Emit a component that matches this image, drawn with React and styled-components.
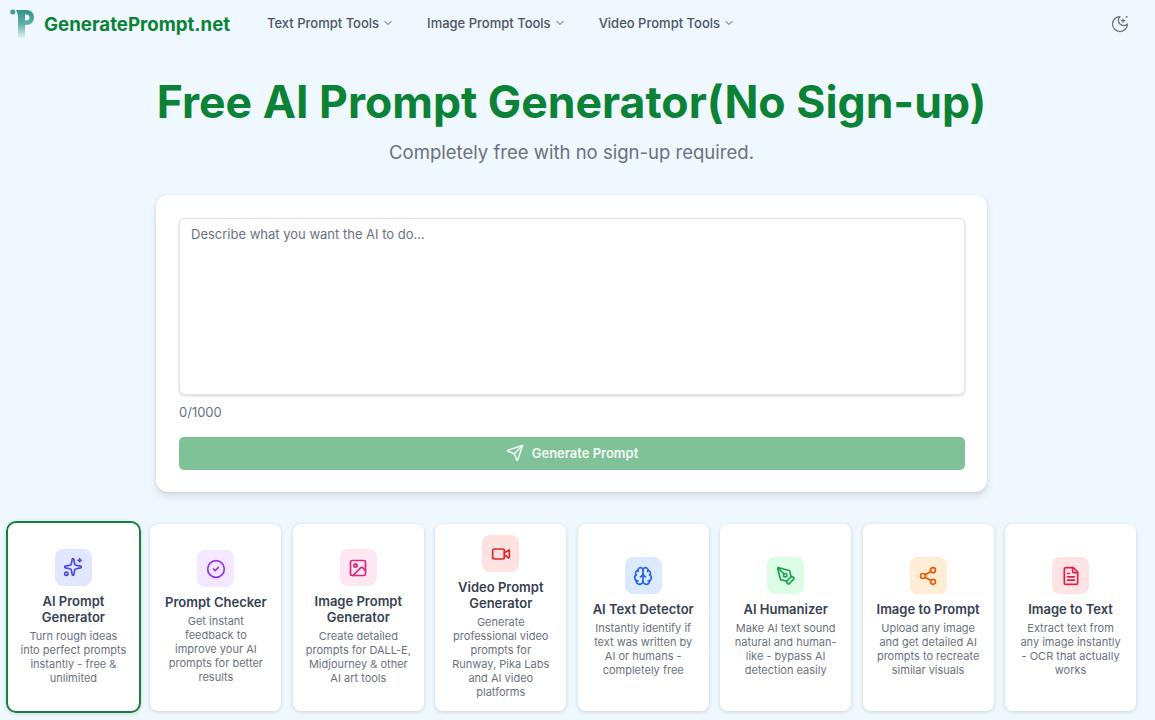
import React from 'react'
import styled, { createGlobalStyle } from 'styled-components'
import { Sparkles, CircleCheck, Image, Video, Brain, PenTool, Share2, FileText, Send, ChevronDown } from 'lucide-react'

const Global = createGlobalStyle`
  html, body { margin: 0; padding: 0; height: 720px; overflow: hidden; }
  body { background: #eff7ff; font-family: Inter, "Liberation Sans", sans-serif; }
  * { box-sizing: border-box; }
`

const Nav = styled.header`
  display: flex;
  align-items: center;
  height: 48px;
  padding: 0 25px 0 10px;
`

const Brand = styled.a`
  display: flex;
  align-items: center;
  gap: 8px;
  width: 257px;
  font-size: 18.7px;
  font-weight: 700;
  color: #0b8235;
`

const Menu = styled.nav`
  display: flex;
  flex: 1;
  gap: 33px;
  margin-bottom: 2px;
`

const MenuItem = styled.a`
  display: flex;
  align-items: center;
  gap: 3px;
  font-size: 13px;
  font-weight: 500;
  color: #4b5563;
`

const ThemeButton = styled.button`
  display: flex;
  padding: 0;
  border: 0;
  background: none;
  color: #6b7280;
`

const Hero = styled.section`
  display: flex;
  flex-direction: column;
  align-items: center;
  padding-right: 12px;
`

const Title = styled.h1`
  margin: 24px 0 0;
  font-size: 44.55px;
  line-height: 60px;
  font-weight: 700;
  color: #0b8235;
`

const Subtitle = styled.p`
  margin: 6px 0 0;
  font-size: 18.55px;
  line-height: 28px;
  color: #6b7280;
`

const Panel = styled.form`
  width: 831px;
  height: 297px;
  margin-top: 29px;
  padding: 23px 22px 23px 23px;
  background: #fff;
  border-radius: 12px;
  box-shadow: 0 4px 8px rgba(0, 0, 0, 0.1), 0 1px 3px rgba(0, 0, 0, 0.08);
`

const Prompt = styled.textarea`
  display: block;
  width: 100%;
  height: 177px;
  padding: 5px 11px;
  resize: none;
  border: 1px solid #e5e7eb;
  border-radius: 6px;
  outline: none;
  font: 400 13px/20px Inter, "Liberation Sans", sans-serif;
  box-shadow: 0 1px 3px rgba(0, 0, 0, 0.18);
  &::placeholder { color: #6b7280; }
`

const Counter = styled.div`
  margin-top: 8px;
  font-size: 13px;
  line-height: 18px;
  color: #6b7280;
`

const Submit = styled.button`
  display: flex;
  align-items: center;
  justify-content: center;
  gap: 8px;
  width: 100%;
  height: 33px;
  margin-top: 16px;
  padding: 0 0 2px;
  border: 0;
  border-radius: 5px;
  background: #80c297;
  color: #f2f9f5;
  font: 600 13px Inter, "Liberation Sans", sans-serif;
`

const Tools = styled.section`
  display: grid;
  grid-template-columns: repeat(8, 1fr);
  gap: 11.6px;
  height: 187px;
  margin-top: 32px;
  padding: 0 19px 0 8px;
`

const Tool = styled.article`
  display: flex;
  flex-direction: column;
  align-items: center;
  justify-content: center;
  padding: 8px 12.5px 9px;
  text-align: center;
  background: #fff;
  border-radius: 8px;
  box-shadow: 0 1px 4px rgba(0, 0, 0, 0.14);
  ${p => p.$active && `
    margin: -3px -2px -2px;
    outline: 2px solid #15803d;
    outline-offset: -2px;
    border-radius: 10px;
  `}
`

const ToolIcon = styled.div`
  display: flex;
  align-items: center;
  justify-content: center;
  width: 37px;
  height: 37px;
  border-radius: 8px;
  background: ${p => p.$bg};
  color: ${p => p.$color};
`

const ToolName = styled.h3`
  margin: 7px 0 4px;
  font-size: 13px;
  line-height: 16px;
  font-weight: 600;
  color: #374151;
`

const ToolText = styled.p`
  margin: 0;
  font-size: 11px;
  line-height: 14px;
  color: #6b7280;
`

const Logo = () => (
  <svg width="26" height="30" viewBox="0 0 26 30" fill="none">
    <defs>
      <linearGradient id="logoFill" x1="0" y1="0" x2="0" y2="1">
        <stop offset="0" stopColor="#2f9488" />
        <stop offset="0.5" stopColor="#62aeaa" />
        <stop offset="1" stopColor="#e9f3f6" />
      </linearGradient>
    </defs>
    <circle cx="2.800" cy="3" r="2.500" fill="#3f9c90" />
    <path fillRule="evenodd" d="M6 1H16C21 1 24 4 24 8.500C24 13 21 16 16 16H15V29H8V8C8 5 7 3 6 1ZM15 5.500V11.500H16C18 11.500 19.500 10.500 19.500 8.500C19.500 6.500 18 5.500 16 5.500Z" fill="url(#logoFill)" />
  </svg>
)

const MoonIcon = () => (
  <svg width="20" height="20" viewBox="0 0 24 24" fill="none" stroke="currentColor" strokeWidth="1.5" strokeLinecap="round" strokeLinejoin="round">
    <path d="M12 3a6 6 0 0 0 9 9 9 9 0 1 1-9-9Z" />
    <path d="M15.600 6v4M13.600 8h4" />
    <circle cx="20" cy="3.600" r="0.500" />
  </svg>
)

const menu = ['Text Prompt Tools', 'Image Prompt Tools', 'Video Prompt Tools']

const tools = [
  { icon: Sparkles, bg: '#e0e7ff', color: '#4f46e5', name: 'AI Prompt Generator', text: 'Turn rough ideas into perfect prompts instantly - free & unlimited', active: true },
  { icon: CircleCheck, bg: '#f3e8ff', color: '#9333ea', name: 'Prompt Checker', text: 'Get instant feedback to improve your AI prompts for better results' },
  { icon: Image, bg: '#fce7f3', color: '#db2777', name: 'Image Prompt Generator', text: 'Create detailed prompts for DALL-E, Midjourney & other AI art tools' },
  { icon: Video, bg: '#fee2e2', color: '#dc2626', name: 'Video Prompt Generator', text: 'Generate professional video prompts for Runway, Pika Labs and AI video platforms' },
  { icon: Brain, bg: '#dbeafe', color: '#2563eb', name: 'AI Text Detector', text: 'Instantly identify if text was written by AI or humans - completely free' },
  { icon: PenTool, bg: '#dcfce7', color: '#16a34a', name: 'AI Humanizer', text: 'Make AI text sound natural and human-like - bypass AI detection easily' },
  { icon: Share2, bg: '#ffedd5', color: '#ea580c', name: 'Image to Prompt', text: 'Upload any image and get detailed AI prompts to recreate similar visuals' },
  { icon: FileText, bg: '#ffe4e6', color: '#e11d48', name: 'Image to Text', text: 'Extract text from any image instantly - OCR that actually works' },
]

export default function App() {
  return (
    <>
      <Global />
      <Nav>
        <Brand><Logo />GeneratePrompt.net</Brand>
        <Menu>
          {menu.map(item => (
            <MenuItem key={item}>{item}<ChevronDown size={12} /></MenuItem>
          ))}
        </Menu>
        <ThemeButton><MoonIcon /></ThemeButton>
      </Nav>
      <Hero>
        <Title>Free AI Prompt Generator(No Sign-up)</Title>
        <Subtitle>Completely free with no sign-up required.</Subtitle>
        <Panel>
          <Prompt placeholder="Describe what you want the AI to do..." />
          <Counter>0/1000</Counter>
          <Submit type="button"><Send size={18} />Generate Prompt</Submit>
        </Panel>
      </Hero>
      <Tools>
        {tools.map(t => (
          <Tool key={t.name} $active={t.active}>
            <ToolIcon $bg={t.bg} $color={t.color}><t.icon size={20} /></ToolIcon>
            <ToolName>{t.name}</ToolName>
            <ToolText>{t.text}</ToolText>
          </Tool>
        ))}
      </Tools>
    </>
  )
}
